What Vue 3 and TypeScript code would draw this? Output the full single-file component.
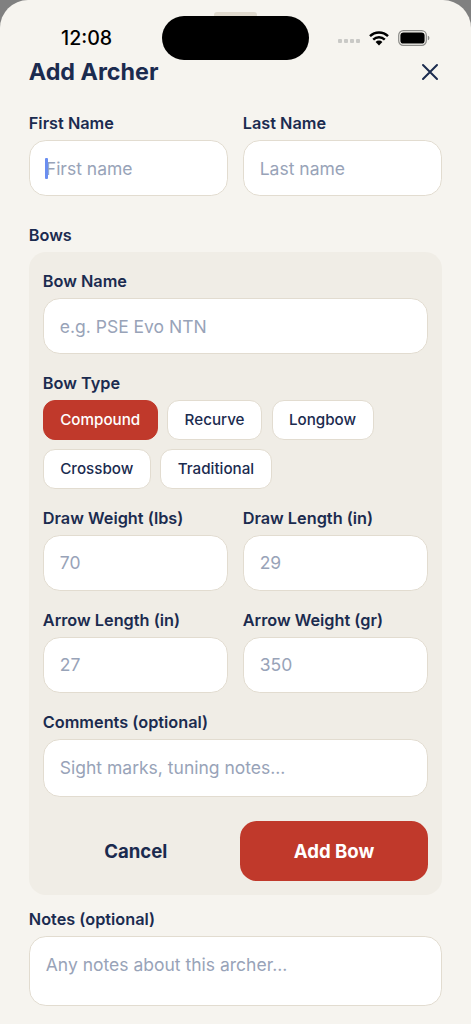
<script setup lang="ts">
const bowTypes: string[] = ['Compound', 'Recurve', 'Longbow', 'Crossbow', 'Traditional']
const selected = 'Compound'
</script>

<template>
  <div class="sheet">
    <div class="handle"></div>
    <div class="status">
      <span class="time">12:08</span>
      <div class="island"></div>
      <div class="status-icons">
        <div class="dots"><i></i><i></i><i></i><i></i></div>
        <svg class="wifi" viewBox="0 0 20 15" width="20" height="15">
          <path d="M1 5.2a12.8 12.8 0 0 1 18 0" fill="none" stroke="#000" stroke-width="2.4" />
          <path d="M4.2 8.6a8.3 8.3 0 0 1 11.6 0" fill="none" stroke="#000" stroke-width="2.4" />
          <path d="M6.6 11a4.8 4.8 0 0 1 6.8 0L10 14.6z" fill="#000" />
        </svg>
        <svg class="battery" viewBox="0 0 32 16" width="32" height="16">
          <rect x="0.7" y="0.7" width="27.6" height="14.6" rx="4.6" fill="none" stroke="#8b8b88" stroke-width="1.2" />
          <rect x="2.4" y="2.4" width="24.2" height="11.2" rx="3.2" fill="#000" />
          <path d="M29.8 5.8c1 .3 1.6 1.1 1.6 2.2s-.6 1.9-1.6 2.2z" fill="#8b8b88" />
        </svg>
      </div>
    </div>

    <header class="title-row">
      <h1>Add Archer</h1>
      <svg class="close" viewBox="0 0 18 18" width="18" height="18">
        <path d="M2 2l14 14M16 2L2 16" stroke="#1b2b4f" stroke-width="2" stroke-linecap="round" fill="none" />
      </svg>
    </header>

    <div class="two names">
      <label class="field first">
        <span class="lbl">First Name</span>
        <span class="caret-wrap">
          <input placeholder="First name" />
          <i class="caret"></i>
        </span>
      </label>
      <label class="field">
        <span class="lbl">Last Name</span>
        <input placeholder="Last name" />
      </label>
    </div>

    <div class="lbl bows-lbl">Bows</div>
    <section class="panel">
      <label class="field">
        <span class="lbl">Bow Name</span>
        <input placeholder="e.g. PSE Evo NTN" />
      </label>

      <div class="lbl type-lbl">Bow Type</div>
      <div class="chips">
        <button v-for="t in bowTypes" :key="t" class="chip" :class="{ on: t === selected }">{{ t }}</button>
      </div>

      <div class="two weights">
        <label class="field">
          <span class="lbl">Draw Weight (lbs)</span>
          <input placeholder="70" />
        </label>
        <label class="field">
          <span class="lbl">Draw Length (in)</span>
          <input placeholder="29" />
        </label>
      </div>

      <div class="two arrows">
        <label class="field">
          <span class="lbl">Arrow Length (in)</span>
          <input placeholder="27" />
        </label>
        <label class="field">
          <span class="lbl">Arrow Weight (gr)</span>
          <input placeholder="350" />
        </label>
      </div>

      <label class="field comments">
        <span class="lbl">Comments (optional)</span>
        <input class="tall" placeholder="Sight marks, tuning notes..." />
      </label>

      <div class="actions">
        <button class="cancel">Cancel</button>
        <button class="add">Add Bow</button>
      </div>
    </section>

    <label class="field notes">
      <span class="lbl">Notes (optional)</span>
      <textarea placeholder="Any notes about this archer..."></textarea>
    </label>
  </div>
</template>

<style>
html, body { margin: 0; background: #808080; }
</style>

<style scoped>
* { box-sizing: border-box; }
.sheet {
  position: relative;
  width: 471px;
  height: 1024px;
  overflow: hidden;
  background: #f6f4ef;
  border-radius: 28px 28px 0 0;
  padding: 0 28.8px;
  font-family: Inter, "Liberation Sans", sans-serif;
  color: #1b2b4f;
}
.handle {
  position: absolute;
  left: 214px;
  top: 12px;
  width: 43px;
  height: 6px;
  border-radius: 3px;
  background: #e0dace;
}
.status { position: absolute; inset: 0 0 auto 0; height: 70px; }
.time {
  position: absolute;
  left: 61px;
  top: 26px;
  font-size: 19.6px;
  line-height: 24px;
  font-weight: 500;
  color: #000;
}
.island {
  position: absolute;
  left: 162px;
  top: 16px;
  width: 147px;
  height: 44px;
  border-radius: 22px;
  background: #000;
}
.status-icons { position: absolute; left: 338px; top: 30px; display: flex; align-items: center; }
.dots { display: flex; gap: 2px; margin-top: 5px; }
.dots i { width: 4px; height: 4px; border-radius: 1px; background: #c9c9c6; display: block; }
.wifi { margin-left: 9px; }
.battery { margin-left: 9px; }

.title-row {
  display: flex;
  justify-content: space-between;
  align-items: center;
  padding-top: 57px;
  height: 87px;
}
h1 { margin: 0; font-size: 23.3px; line-height: 30px; font-weight: 700; letter-spacing: 0; }
.close { margin-right: 3.2px; }

.two { display: grid; grid-template-columns: 1fr 1fr; gap: 14.4px; }
.names { margin-top: 26px; }
.field { display: flex; flex-direction: column; min-width: 0; }
.lbl {
  display: block;
  font-size: 16.3px;
  line-height: 20px;
  font-weight: 600;
  margin-bottom: 7px;
}
input, textarea {
  display: block;
  width: 100%;
  height: 56px;
  border: 1.5px solid #e2dcd0;
  border-radius: 16.8px;
  background: #fff;
  padding: 0 16px;
  font: 400 17.5px Inter, "Liberation Sans", sans-serif;
  color: #1b2b4f;
  outline: none;
  margin: 0;
}
input::placeholder, textarea::placeholder { color: #98a3b8; opacity: 1; }
.caret-wrap { position: relative; display: block; }
.caret {
  position: absolute;
  left: 16.4px;
  top: 18px;
  width: 2.4px;
  height: 21px;
  background: #6a8ef0;
  border-radius: 1px;
}
.bows-lbl { margin: 29px 0 7px; }
.panel {
  background: #f0ede6;
  border-radius: 16.8px;
  padding: 19px 14px 14.4px;
}
.type-lbl { margin: 19px 0 7px; }
.chips { display: flex; flex-wrap: wrap; gap: 9.6px; }
.chip {
  height: 39.5px;
  padding: 0 16.4px;
  border: 1.5px solid #e2dcd0;
  border-radius: 12px;
  background: #fff;
  color: #1b2b4f;
  font: 500 15.2px Inter, "Liberation Sans", sans-serif;
}
.chip.on { background: #c0392b; border-color: #c0392b; color: #fff; }
.weights { margin-top: 19px; }
.arrows { margin-top: 19px; }
.comments { margin-top: 19px; }
.tall { height: 58px; }
.actions {
  display: grid;
  grid-template-columns: 186px 1fr;
  gap: 11px;
  margin-top: 24px;
}
.actions button {
  height: 60px;
  border: none;
  border-radius: 16.8px;
  font: 700 18.6px Inter, "Liberation Sans", sans-serif;
}
.cancel { background: transparent; color: #1b2b4f; }
.add { background: #c0392b; color: #fff; }
.notes { margin-top: 14px; }
textarea {
  height: 70px;
  padding: 16px;
  resize: none;
  line-height: 24px;
}
</style>
